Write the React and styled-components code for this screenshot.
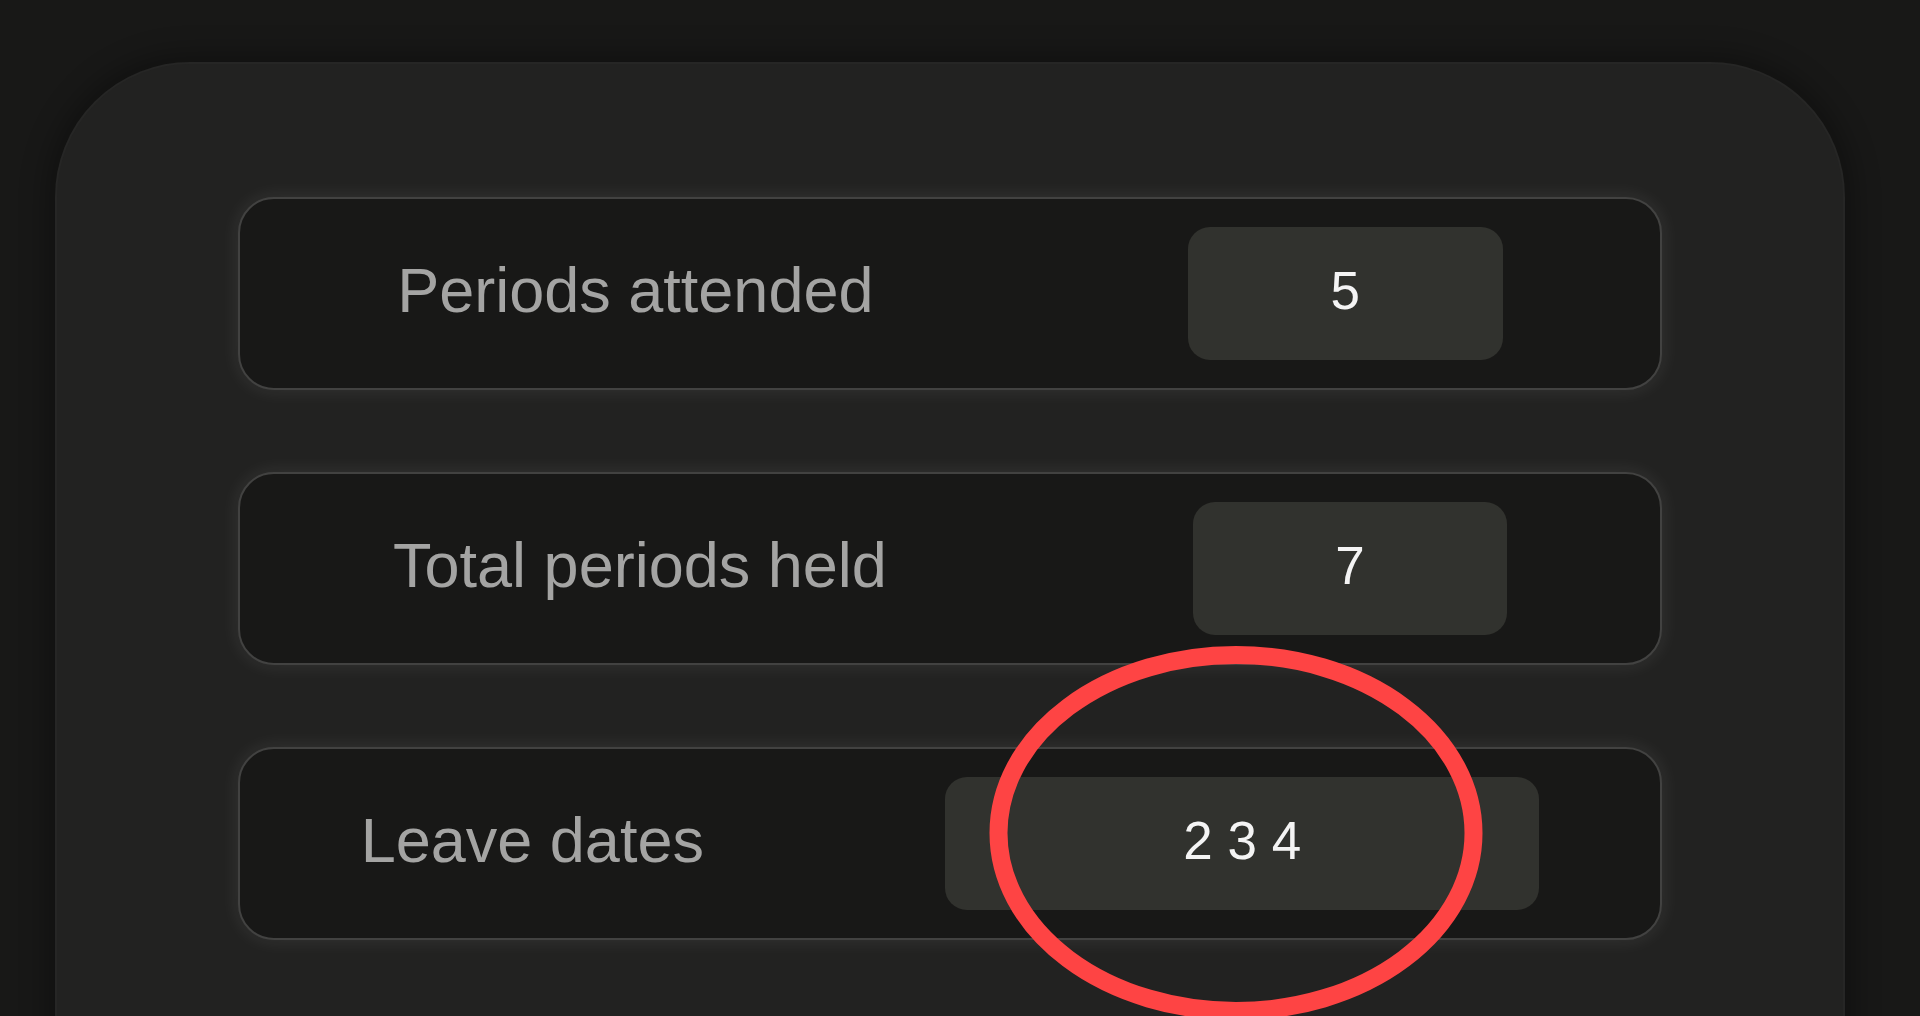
import styled, { createGlobalStyle } from "styled-components";

const stats = [
  { label: "Periods attended", value: "5", width: 315 },
  { label: "Total periods held", value: "7", width: 314 },
  { label: "Leave dates", value: "2 3 4", width: 594 },
];

const App = () => {
  return (
    <Page>
      <GlobalStyle />
      <Panel>
        <List>
          {stats.map((item, key) => (
            <Row key={key}>
              <Label>{item.label}</Label>
              <Value $width={item.width}>{item.value}</Value>
            </Row>
          ))}
        </List>
      </Panel>
      <Mark viewBox="0 0 1920 1016" aria-hidden="true">
        <ellipse cx="1236" cy="833" rx="237.5" ry="178" fill="none" stroke="#fe4444" strokeWidth="18" />
      </Mark>
    </Page>
  );
};

export default App;

const GlobalStyle = createGlobalStyle`
  html, body {
    margin: 0;
    background: #181817;
    overflow: hidden;
  }
  body {
    font-family: "Liberation Sans", Arial, sans-serif;
  }
`;

const Page = styled.div`
  position: relative;
  height: 1016px;
  overflow: hidden;
  padding: 62px 75px 0 55px;
  box-sizing: border-box;
`;

const Panel = styled.div`
  height: 1100px;
  padding: 133px 181px 0 181px;
  box-sizing: border-box;
  background: #222221;
  border: 2px solid #262625;
  border-radius: 135px;
  box-shadow: 0 0 28px 8px rgba(0, 0, 0, 0.3);
`;

const List = styled.div`
  display: flex;
  flex-direction: column;
  gap: 82px;
`;

const Row = styled.div`
  height: 193px;
  box-sizing: border-box;
  display: flex;
  align-items: center;
  justify-content: space-around;
  background: #181817;
  border: 2px solid #424241;
  border-radius: 36px;
  box-shadow: 0 0 20px rgba(255, 255, 255, 0.09);
`;

const Label = styled.div`
  font-size: 63px;
  color: #a4a4a3;
  margin-top: -7px;
`;

const Value = styled.div`
  width: ${p => p.$width}px;
  height: 133px;
  box-sizing: border-box;
  padding-bottom: 6px;
  display: flex;
  align-items: center;
  justify-content: center;
  background: #31322e;
  border-radius: 22px;
  color: #f4f4f4;
  font-size: 53px;
`;

const Mark = styled.svg`
  position: absolute;
  left: 0;
  top: 0;
  width: 1920px;
  height: 1016px;
  pointer-events: none;
`;
